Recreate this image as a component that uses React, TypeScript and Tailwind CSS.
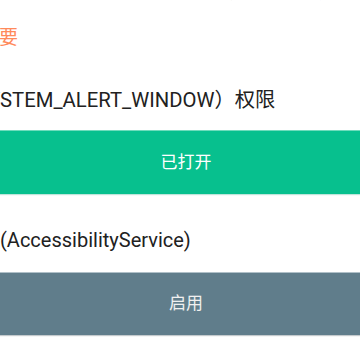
import React from "react";

const font = { fontFamily: 'Roboto, "Noto Sans CJK SC", sans-serif' };

export default function App() {
  return (
    <div className="w-[360px] h-[360px] overflow-hidden bg-white" style={font}>
      <div className="flex flex-col">
        <div className="h-[4px] relative overflow-hidden">
          <div className="absolute left-[64px] bottom-[1px] text-[15px] leading-[20px] text-[#b0b0b0] whitespace-nowrap">
            请在设置中开启以下权限，以便正常使用</div>
        </div>
        <div className="mt-[22px] -ml-[20px] text-[19px] leading-[24px] text-[#ff8a5b] whitespace-nowrap">
          需要
        </div>
        <div className="mt-[38px] -ml-[24px] text-[20.3px] leading-[24px] text-[#212121] whitespace-nowrap">
          SYSTEM_ALERT_WINDOW）权限
        </div>
        <button className="mt-[18px] h-[64px] w-full bg-[#07c08e] border-t border-[#6fdcbc] shadow-[0_1px_1px_rgba(0,150,110,0.25)] flex items-center justify-center pl-[12px] text-[17px] text-white">
          已打开
        </button>
        <div className="mt-[34px] text-[20px] leading-[24px] text-[#212121] whitespace-nowrap">
          (AccessibilityService)
        </div>
        <button className="mt-[20px] h-[63px] w-full bg-[#607d8b] border-t border-[#b0c0c8] shadow-[0_1px_1px_rgba(60,80,90,0.3)] flex items-center justify-center pl-[12px] text-[17px] text-[#f0f0f0]">
          启用
        </button>
      </div>
    </div>
  );
}
